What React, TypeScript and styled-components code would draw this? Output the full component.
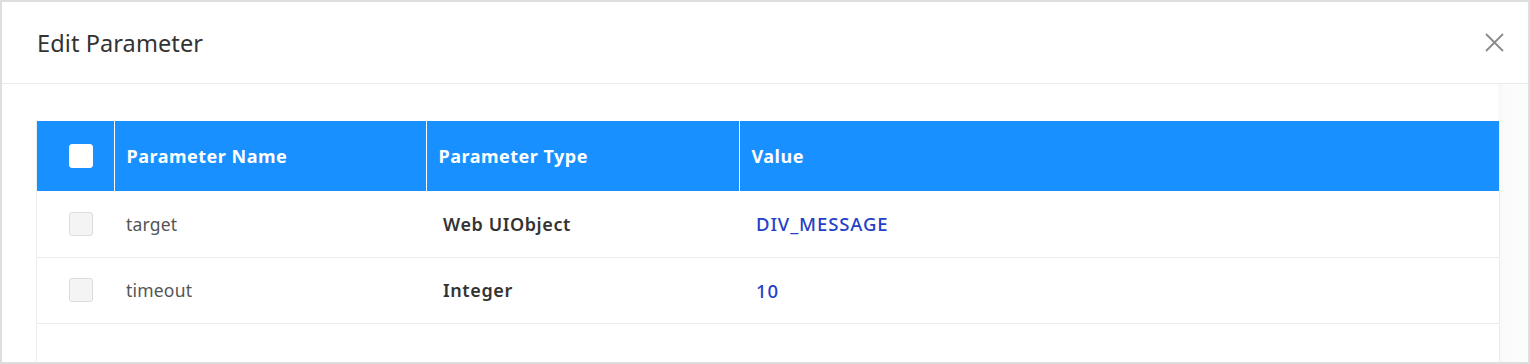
import React from "react";
import styled, { createGlobalStyle } from "styled-components";

const GlobalStyle = createGlobalStyle`
  html, body {
    margin: 0;
    padding: 0;
    background: #ffffff;
  }
  body {
    font-family: "Noto Sans", "Open Sans", "Liberation Sans", sans-serif;
  }
`;

const Frame = styled.div`
  box-sizing: border-box;
  width: 1530px;
  height: 364px;
  border: 2px solid #dedede;
  background: #fff;
  overflow: hidden;
  display: flex;
  flex-direction: column;
`;

const Header = styled.div`
  height: 81px;
  flex-shrink: 0;
  border-bottom: 1px solid #ebebeb;
  display: flex;
  align-items: center;
  justify-content: space-between;
  padding: 0 24px 0 35px;
`;

const Title = styled.h2`
  margin: 0;
  font-size: 23.5px;
  font-weight: 400;
  color: #333;
  letter-spacing: 0.1px;
`;

const CloseButton = styled.button`
  border: none;
  background: none;
  padding: 0;
  width: 20px;
  height: 20px;
  display: flex;
  align-items: center;
  justify-content: center;
  cursor: pointer;
`;

const Body = styled.div`
  flex: 1;
  padding: 37px 24px 0 35px;
  background: linear-gradient(
    to right,
    #fff 0,
    #fff 1496px,
    #f7f7f7 1497px,
    #fbfbfb 1502px,
    #fcfcfc 100%
  );
`;

const TableWrap = styled.div`
  width: 1462px;
  border: 1px solid #ececec;
  border-top: none;
  border-bottom: none;
  background: #fff;
  height: 100%;
  margin-left: -1px;
`;

const Table = styled.table`
  width: 100%;
  border-collapse: collapse;
  table-layout: fixed;
`;

const HeadCell = styled.th<{ $width?: number }>`
  width: ${(p) => (p.$width ? `${p.$width}px` : "auto")};
  height: 70px;
  box-sizing: border-box;
  background: #1890ff;
  color: #fff;
  font-size: 18px;
  font-weight: 700;
  letter-spacing: 0.5px;
  text-align: left;
  padding: 0 0 0 12px;
  border-left: 1px solid #ffffff;
  &:first-child {
    border-left: none;
    padding-left: 32px;
  }
`;

const Row = styled.tr`
  border-bottom: 1px solid #ececec;
`;

const Cell = styled.td<{ $tone?: "name" | "type" | "value" }>`
  height: 66px;
  box-sizing: border-box;
  padding: 0 0 0 ${(p) => (p.$tone === "name" ? 12 : 17)}px;
  font-size: ${(p) =>
    p.$tone === "value" ? 18.5 : p.$tone === "type" ? 18 : 17.5}px;
  letter-spacing: ${(p) =>
    p.$tone === "value" ? 0.9 : p.$tone === "type" ? 0.6 : 0.2}px;
  color: ${(p) =>
    p.$tone === "value" ? "#2540c8" : p.$tone === "type" ? "#333" : "#555"};
  font-weight: ${(p) =>
    p.$tone === "type" ? 600 : p.$tone === "value" ? 500 : 400};
  &:first-child {
    padding-left: 32px;
  }
`;

const Check = styled.span<{ $head?: boolean }>`
  display: block;
  width: 24px;
  height: 24px;
  box-sizing: border-box;
  border-radius: 3px;
  background: ${(p) => (p.$head ? "#fff" : "#f4f4f4")};
  border: 1px solid ${(p) => (p.$head ? "#fff" : "#dcdcdc")};
`;

const params = [
  { name: "target", type: "Web UIObject", value: "DIV_MESSAGE" },
  { name: "timeout", type: "Integer", value: "10" },
];

export default function App() {
  return (
    <>
      <GlobalStyle />
      <Frame>
        <Header>
          <Title>Edit Parameter</Title>
          <CloseButton aria-label="Close">
            <svg width="19" height="19" viewBox="0 0 19 19">
              <path
                d="M1 1 L18 18 M18 1 L1 18"
                stroke="#8a8a8a"
                strokeWidth="1.8"
                fill="none"
              />
            </svg>
          </CloseButton>
        </Header>
        <Body>
          <TableWrap>
            <Table>
              <thead>
                <tr>
                  <HeadCell $width={77}>
                    <Check $head />
                  </HeadCell>
                  <HeadCell $width={312}>Parameter Name</HeadCell>
                  <HeadCell $width={313}>Parameter Type</HeadCell>
                  <HeadCell>Value</HeadCell>
                </tr>
              </thead>
              <tbody>
                {params.map((p) => (
                  <Row key={p.name}>
                    <Cell>
                      <Check />
                    </Cell>
                    <Cell $tone="name">{p.name}</Cell>
                    <Cell $tone="type">{p.type}</Cell>
                    <Cell $tone="value">{p.value}</Cell>
                  </Row>
                ))}
              </tbody>
            </Table>
          </TableWrap>
        </Body>
      </Frame>
    </>
  );
}
